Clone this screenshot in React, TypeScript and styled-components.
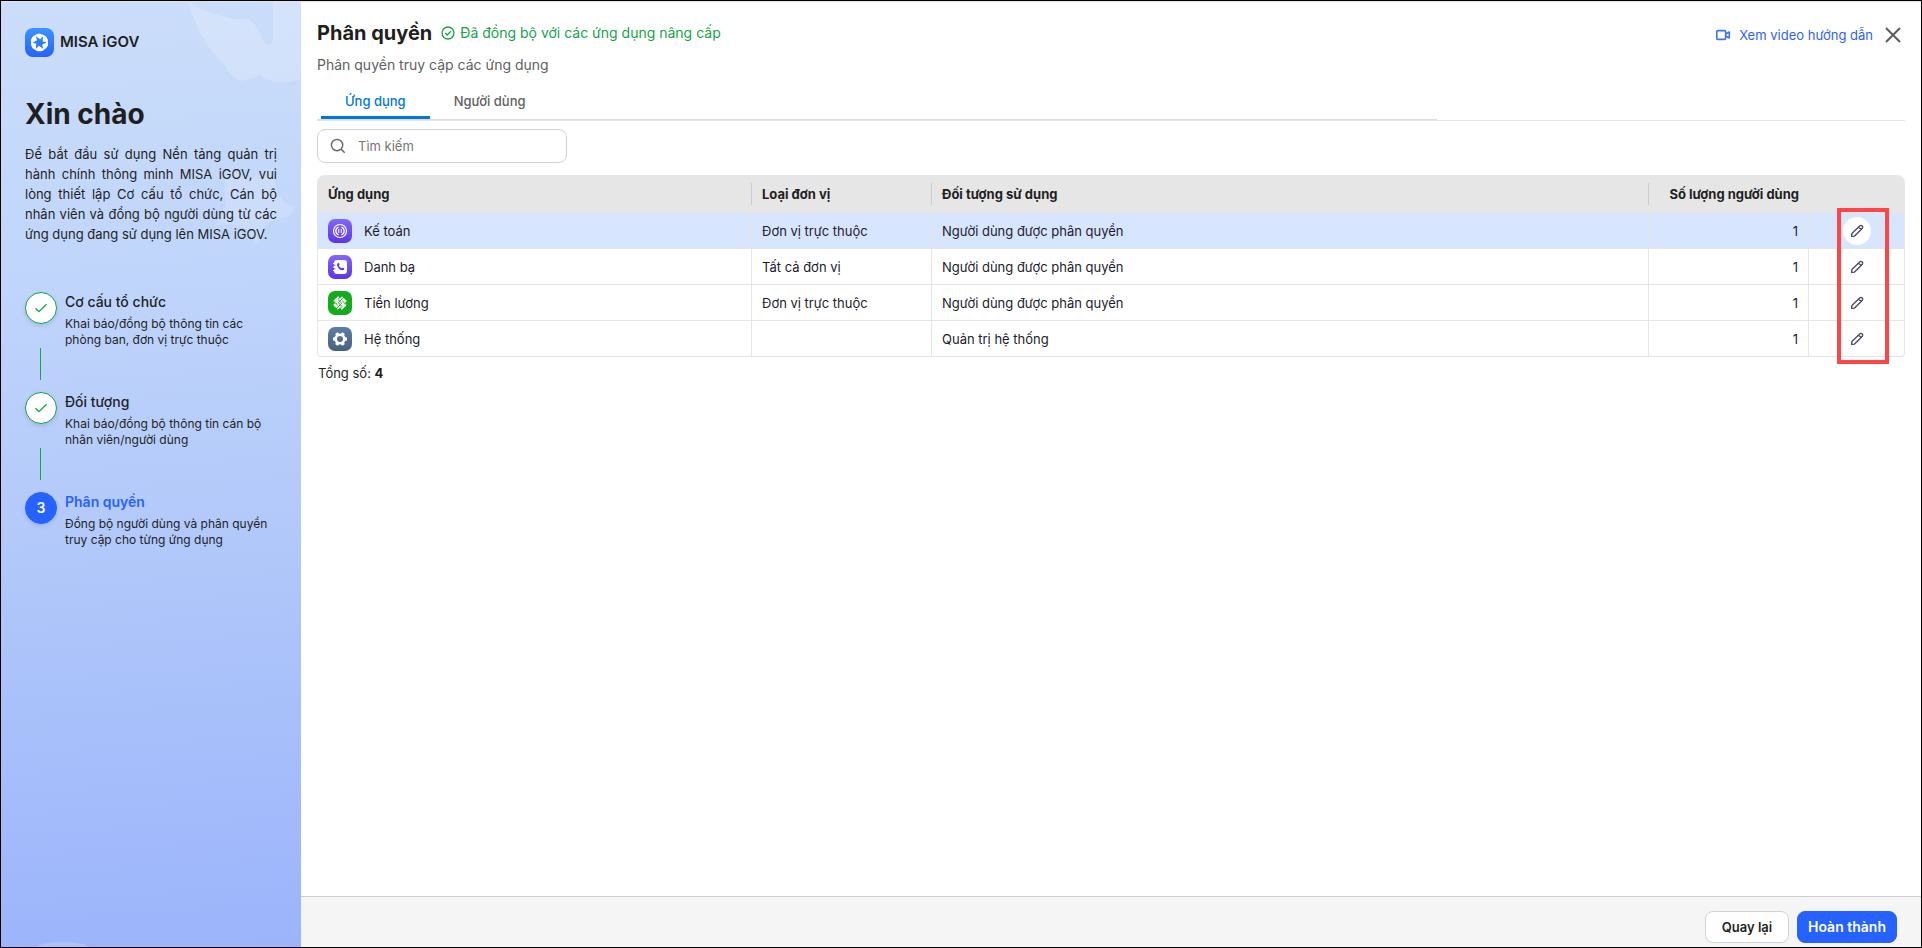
import React from "react";
import styled, { createGlobalStyle, css } from "styled-components";

const Global = createGlobalStyle`
  *, *::before, *::after { box-sizing: border-box; }
  body { margin: 0; background: #fff; }
  body, button, input, table { font-family: Inter, "Noto Sans", sans-serif; font-size: 13px; line-height: 20px; color: #1f1f1f; }
  h1, h2, h3, p, ol { margin: 0; padding: 0; }
`;

const Frame = styled.div`
  display: flex;
  min-height: 100vh;
  border: 1px solid #000;
`;

const Sidebar = styled.aside`
  position: relative;
  flex: 0 0 300px;
  padding: 26px 24px;
  overflow: hidden;
  background: linear-gradient(176deg, #cbddf9 0%, #bfd5fb 30%, #b0c7fa 60%, #9bb4fb 100%);
  border-top: 1px solid #e4e2ea;
`;

const Decoration = styled.svg`
  position: absolute;
  inset: 0;
  width: 100%;
  height: 100%;
`;

const SidebarBody = styled.div`
  position: relative;
`;

const Brand = styled.div`
  display: flex;
  align-items: center;
  gap: 6px;
  height: 28px;
  font-size: 15px;
  font-weight: 600;
`;

const Greeting = styled.h2`
  margin-top: 40px;
  font-size: 28px;
  line-height: 36px;
  font-weight: 700;
`;

const Intro = styled.p`
  margin-top: 12px;
  text-align: justify;
`;

const Steps = styled.ol`
  margin-top: 48px;
  list-style: none;
`;

const Step = styled.li`
  display: flex;
  gap: 8px;
  min-height: 100px;
`;

const StepRail = styled.div`
  display: flex;
  flex-direction: column;
  align-items: center;
  gap: 24px;
`;

const StepMark = styled.span<{ $current?: boolean }>`
  display: flex;
  align-items: center;
  justify-content: center;
  width: 32px;
  height: 32px;
  border-radius: 50%;
  font-size: 14px;
  font-weight: 600;
  border: 1px solid ${(p) => (p.$current ? "#2662ff" : "#16a34a")};
  background: ${(p) => (p.$current ? "#2662ff" : "#fff")};
  color: ${(p) => (p.$current ? "#fff" : "#16a34a")};
  box-shadow: 0 2px 4px rgba(30, 60, 130, 0.15);
`;

const StepLine = styled.span`
  width: 1px;
  height: 32px;
  margin-right: 1px;
  background: #16a34a;
`;

const StepTitle = styled.h3<{ $current?: boolean }>`
  font-size: 14px;
  line-height: 20px;
  font-weight: ${(p) => (p.$current ? 600 : 500)};
  color: ${(p) => (p.$current ? "#2662ff" : "#1f1f1f")};
`;

const StepText = styled.p`
  margin-top: 4px;
  font-size: 12px;
  line-height: 16px;
`;

const Main = styled.main`
  display: flex;
  flex: 1;
  flex-direction: column;
  min-width: 0;
  border-top: 1px solid #e4e2e6;
`;

const Content = styled.div`
  flex: 1;
  padding: 16px;
`;

const Header = styled.header`
  display: flex;
  align-items: center;
  justify-content: space-between;
  height: 30px;
`;

const HeaderGroup = styled.div`
  display: flex;
  align-items: center;
  gap: 8px;
`;

const HeaderActions = styled(HeaderGroup)`
  padding-top: 4px;
`;

const Title = styled.h1`
  font-size: 20px;
  line-height: 28px;
  font-weight: 700;
`;

const SyncStatus = styled.span`
  display: flex;
  align-items: center;
  gap: 4px;
  font-size: 14px;
  color: #16a34a;
`;

const VideoLink = styled.a`
  display: flex;
  align-items: center;
  gap: 8px;
  color: #2f62fa;
  text-decoration: none;
`;

const iconButton = css`
  display: inline-flex;
  align-items: center;
  justify-content: center;
  padding: 0;
  border: 0;
  background: none;
  cursor: pointer;
`;

const CloseButton = styled.button`
  ${iconButton}
  width: 24px;
  height: 24px;
`;

const Subtitle = styled.p`
  margin-top: 6px;
  font-size: 14px;
  line-height: 22px;
  color: #616161;
`;

const TabBar = styled.div`
  border-bottom: 1px solid #e4e4e9;
`;

const Tabs = styled.div`
  display: flex;
  width: calc(70% + 8px);
  padding-left: 4px;
  border-bottom: 1px solid #dcdcdc;
`;

const Tab = styled.button<{ $active?: boolean }>`
  height: 43px;
  padding: 13px 24px 4px;
  border: 0;
  border-bottom: 3px solid ${(p) => (p.$active ? "#0078d7" : "transparent")};
  background: none;
  font-weight: 500;
  color: ${(p) => (p.$active ? "#0078d7" : "#616161")};
  cursor: pointer;
`;

const SearchBox = styled.label`
  display: flex;
  align-items: center;
  gap: 12px;
  width: 250px;
  height: 34px;
  margin-top: 8px;
  padding: 0 12px;
  border: 1px solid #d1d1db;
  border-radius: 8px;
`;

const SearchInput = styled.input`
  flex: 1;
  min-width: 0;
  padding: 0;
  border: 0;
  outline: 0;
  background: none;
  &::placeholder { color: #757575; opacity: 1; }
`;

const TableWrap = styled.div`
  position: relative;
  margin-top: 12px;
`;

const Table = styled.table`
  width: 100%;
  table-layout: fixed;
  border-collapse: separate;
  border-spacing: 0;
`;

const HeadCell = styled.th<{ $width?: number; $align?: string; $divided?: boolean }>`
  position: relative;
  width: ${(p) => (p.$width ? `${p.$width}px` : "auto")};
  height: 38px;
  padding: 0 10px;
  background: #e6e6e6;
  font-weight: 700;
  text-align: ${(p) => p.$align || "left"};
  &:first-child { border-top-left-radius: 8px; padding-left: 11px; }
  &:last-child { border-top-right-radius: 8px; }
  ${(p) =>
    p.$divided &&
    css`
      &::after {
        content: "";
        position: absolute;
        top: 8px;
        right: 0;
        width: 1px;
        height: 22px;
        background: #ccc;
      }
    `}
`;

const Row = styled.tr<{ $selected?: boolean }>`
  background: ${(p) => (p.$selected ? "#d8e5ff" : "#fff")};
  &:last-child td:first-child { border-bottom-left-radius: 4px; }
  &:last-child td:last-child { border-bottom-right-radius: 4px; }
`;

const Cell = styled.td<{ $align?: string }>`
  height: 36px;
  padding: 0 10px;
  border-right: 1px solid #e4e4e9;
  border-bottom: 1px solid #e4e4e9;
  color: #1c1c2b;
  text-align: ${(p) => p.$align || "left"};
  &:first-child { border-left: 1px solid #e4e4e9; }
`;

const AppName = styled.span`
  display: flex;
  align-items: center;
  gap: 12px;
`;

const EditButton = styled.button<{ $selected?: boolean }>`
  ${iconButton}
  width: 28px;
  height: 28px;
  border-radius: 50%;
  background: ${(p) => (p.$selected ? "#fff" : "transparent")};
  vertical-align: middle;
`;

const Highlight = styled.div`
  position: absolute;
  top: 33px;
  right: 16px;
  width: 52px;
  bottom: -7px;
  border: 4px solid #ff4545;
  pointer-events: none;
`;

const Total = styled.p`
  margin: 6px 1px 0;
`;

const Footer = styled.footer`
  display: flex;
  justify-content: flex-end;
  gap: 8px;
  height: 51px;
  padding: 14px 24px 4px;
  border-top: 1px solid #ccc;
  background: #f5f5f5;
`;

const ActionButton = styled.button<{ $primary?: boolean }>`
  min-width: ${(p) => (p.$primary ? 100 : 84)}px;
  height: 32px;
  padding: 0 8px;
  border: 1px solid ${(p) => (p.$primary ? "#2662ff" : "#d1d1db")};
  border-radius: 8px;
  background: ${(p) => (p.$primary ? "#2662ff" : "#fff")};
  font-size: ${(p) => (p.$primary ? 14 : 13)}px;
  font-weight: 600;
  color: ${(p) => (p.$primary ? "#fff" : "#1f1f1f")};
  cursor: pointer;
`;

function BrandLogo() {
  return (
    <svg width="29" height="29" viewBox="0 0 29 29" aria-hidden="true">
      <defs>
        <linearGradient id="brand" x1="0" y1="0" x2="0" y2="1">
          <stop offset="0" stopColor="#3b93ff" />
          <stop offset="1" stopColor="#2463fb" />
        </linearGradient>
      </defs>
      <rect width="29" height="29" rx="8" fill="url(#brand)" />
      <g transform="translate(14.5 14.5)" fill="#fff">
        {[0, 60, 120, 180, 240, 300].map((a) => (
          <path key={a} transform={`rotate(${a})`} d="M-4.2 -7.4C-1.6 -9.8 3.4 -9.2 5.4 -6C3.4 -6.4 1.8 -5 0.8 -3.2C-0.4 -4.4 -2.8 -4.8 -4.2 -7.4Z" />
        ))}
      </g>
    </svg>
  );
}

const tileColors: Record<string, [string, string]> = {
  accounting: ["#8268fa", "#5f33e6"],
  contacts: ["#8268fa", "#5f33e6"],
  payroll: ["#14ab1c", "#14ab1c"],
  system: ["#5d7ea8", "#46607f"],
};

function AppIcon({ kind }: { kind: string }) {
  const [from, to] = tileColors[kind];
  return (
    <svg width="24" height="24" viewBox="0 0 24 24" aria-hidden="true">
      <defs>
        <linearGradient id={kind} x1="0" y1="0" x2="0" y2="1">
          <stop offset="0" stopColor={from} />
          <stop offset="1" stopColor={to} />
        </linearGradient>
      </defs>
      <rect width="24" height="24" rx="7" fill={`url(#${kind})`} />
      {kind === "accounting" && (
        <g fill="none" stroke="#fff">
          <circle cx="12" cy="12" r="6.5" strokeWidth="1.2" />
          <path d="M10.6 8.2A4 4 0 0 0 10.6 15.8M13.4 8.2A4 4 0 0 1 13.4 15.8" strokeWidth="1.3" />
          <path d="M10.8 10v4M13.2 10v4" strokeWidth="1" />
        </g>
      )}
      {kind === "contacts" && (
        <>
          <rect x="6" y="5" width="13" height="14" rx="3" fill="#fff" />
          <path d="M5 8.5h3M5 12h3M5 15.5h3" stroke="#fff" strokeWidth="1.2" />
          <path d="M6 10.2h1.5M6 13.8h1.5" stroke={from} />
          <path d="M9.4 8.6c.8-1 1.6-.6 2 .5.3.9-.5 1.2-.3 1.8.3.9 1.2 1.9 2.2 2.2.7.2 1-.7 1.8-.4 1.2.4 1.5 1.2.6 2-1.2 1.1-3.2.5-4.6-.9-1.5-1.5-2.6-3.9-1.7-5.200Z" fill={to} />
        </>
      )}
      {kind === "payroll" && (
        <>
          <path d="M7.600 7.600L16.400 16.400M16.400 7.600L7.600 16.400" stroke="#fff" strokeWidth="7" strokeLinejoin="round" />
          <g fill="none" stroke={from} strokeWidth="1">
            <path d="M16.200 5.800L10.300 11.700L14 15.400L10.800 18.600" />
            <path d="M13.200 5.400L10 8.600L13.700 12.300L7.800 18.200" />
            <path d="M5.200 9.600L9.800 14.200M14.200 9.800L18.800 14.400" />
          </g>
        </>
      )}
      {kind === "system" && (
        <g transform="translate(12 12)">
          <circle r="4.3" fill="none" stroke="#fff" strokeWidth="2.6" />
          {[0, 60, 120, 180, 240, 300].map((a) => (
            <rect key={a} transform={`rotate(${a})`} x="4" y="-1.7" width="3" height="3.4" rx="1" fill="#fff" />
          ))}
        </g>
      )}
    </svg>
  );
}

function PencilIcon() {
  return (
    <svg width="14" height="14" viewBox="0 0 14 14" fill="none" stroke="#4b5060" strokeWidth="1.4" strokeLinejoin="round" aria-hidden="true">
      <path d="M1.6 12.400L1.900 9.400L9.600 1.900C10.400 1.100 11.500 1.200 12.100 1.900C12.800 2.500 12.900 3.600 12.100 4.400L4.600 12.100L1.600 12.400ZM8.600 3L11 5.400" />
    </svg>
  );
}

const steps = [
  { title: "Cơ cấu tổ chức", text: "Khai báo/đồng bộ thông tin các phòng ban, đơn vị trực thuộc" },
  { title: "Đối tượng", text: "Khai báo/đồng bộ thông tin cán bộ nhân viên/người dùng" },
  { title: "Phân quyền", text: "Đồng bộ người dùng và phân quyền truy cập cho từng ứng dụng", current: true },
];

const apps = [
  { kind: "accounting", name: "Kế toán", unit: "Đơn vị trực thuộc", audience: "Người dùng được phân quyền", users: 1 },
  { kind: "contacts", name: "Danh bạ", unit: "Tất cả đơn vị", audience: "Người dùng được phân quyền", users: 1 },
  { kind: "payroll", name: "Tiền lương", unit: "Đơn vị trực thuộc", audience: "Người dùng được phân quyền", users: 1 },
  { kind: "system", name: "Hệ thống", unit: "", audience: "Quản trị hệ thống", users: 1 },
];

export default function App() {
  return (
    <>
      <Global />
      <Frame>
        <Sidebar>
          <Decoration aria-hidden="true">
            <g fill="#fff">
              <path opacity=".2" d="M187 0C195 25 206 48 222 61C227 69 232 76 239 79C247 78 253 76 258 73C270 82 286 82 300 77V0H272V38C268 50 262 40 256 26C251 17 245 16 238 17C219 16 201 8 187 0Z" />
              <path opacity=".15" d="M227 164C237 177 255 180 272 165C272 187 278 198 292 205C294 212 287 216 276 217C266 219 262 225 260 236C257 247 253 244 250 233C246 224 235 221 213 224C220 215 225 207 224 198C223 185 224 171 227 164Z" />
              <ellipse opacity=".2" cx="62" cy="100%" rx="25" ry="5" />
            </g>
          </Decoration>
          <SidebarBody>
            <Brand>
              <BrandLogo />
              MISA iGOV
            </Brand>
            <Greeting>Xin chào</Greeting>
            <Intro>
              Để bắt đầu sử dụng Nền tảng quản trị hành chính thông minh MISA iGOV, vui lòng thiết lập Cơ cấu tổ chức, Cán bộ
              nhân viên và đồng bộ người dùng từ các ứng dụng đang sử dụng lên MISA iGOV.
            </Intro>
            <Steps>
              {steps.map((step, i) => (
                <Step key={step.title}>
                  <StepRail>
                    <StepMark $current={step.current}>
                      {step.current ? (
                        i + 1
                      ) : (
                        <svg width="14" height="12" viewBox="0 0 14 12" fill="none" stroke="currentColor" strokeWidth="1.3" aria-label="Hoàn tất">
                          <path d="M1.5 6.2L5 9.7L12.5 2.2" />
                        </svg>
                      )}
                    </StepMark>
                    {!step.current && <StepLine />}
                  </StepRail>
                  <div>
                    <StepTitle $current={step.current}>{step.title}</StepTitle>
                    <StepText>{step.text}</StepText>
                  </div>
                </Step>
              ))}
            </Steps>
          </SidebarBody>
        </Sidebar>
        <Main>
          <Content>
            <Header>
              <HeaderGroup>
                <Title>Phân quyền</Title>
                <SyncStatus>
                  <svg width="16" height="16" viewBox="0 0 16 16" fill="none" stroke="currentColor" strokeWidth="1.3" aria-hidden="true">
                    <circle cx="8" cy="8" r="6" />
                    <path d="M5.3 8L7.3 10L10.8 6.3" />
                  </svg>
                  Đã đồng bộ với các ứng dụng nâng cấp
                </SyncStatus>
              </HeaderGroup>
              <HeaderActions>
                <VideoLink href="#video">
                  <svg width="16" height="16" viewBox="0 0 16 16" fill="none" stroke="#3f74e8" strokeWidth="1.6" strokeLinejoin="round" aria-hidden="true">
                    <rect x="1.8" y="3.600" width="8.800" height="8.800" rx="1" />
                    <path d="M10.600 7L14.300 5V11L10.600 9" />
                  </svg>
                  Xem video hướng dẫn
                </VideoLink>
                <CloseButton aria-label="Đóng">
                  <svg width="16" height="16" viewBox="0 0 16 16" stroke="#5c5c5c" strokeWidth="2" aria-hidden="true">
                    <path d="M1 1L15 15M15 1L1 15" />
                  </svg>
                </CloseButton>
              </HeaderActions>
            </Header>
            <Subtitle>Phân quyền truy cập các ứng dụng</Subtitle>
            <TabBar>
              <Tabs role="tablist">
                <Tab role="tab" aria-selected="true" $active>
                  Ứng dụng
                </Tab>
                <Tab role="tab" aria-selected="false">
                  Người dùng
                </Tab>
              </Tabs>
            </TabBar>
            <SearchBox>
              <svg width="16" height="16" viewBox="0 0 17 17" fill="none" stroke="#6b6b6b" strokeWidth="1.6" aria-hidden="true">
                <circle cx="7.5" cy="7.5" r="6" />
                <path d="M11.8 11.8L15.6 15.6" />
              </svg>
              <SearchInput type="text" placeholder="Tìm kiếm" aria-label="Tìm kiếm" />
            </SearchBox>
            <TableWrap>
              <Table>
                <thead>
                  <tr>
                    <HeadCell $width={435} $divided>Ứng dụng</HeadCell>
                    <HeadCell $width={180} $divided>Loại đơn vị</HeadCell>
                    <HeadCell $divided>Đối tượng sử dụng</HeadCell>
                    <HeadCell $width={160} $align="right">Số lượng người dùng</HeadCell>
                    <HeadCell $width={96} aria-label="Thao tác" />
                  </tr>
                </thead>
                <tbody>
                  {apps.map((app, i) => (
                    <Row key={app.kind} $selected={i === 0}>
                      <Cell>
                        <AppName>
                          <AppIcon kind={app.kind} />
                          {app.name}
                        </AppName>
                      </Cell>
                      <Cell>{app.unit}</Cell>
                      <Cell>{app.audience}</Cell>
                      <Cell $align="right">{app.users}</Cell>
                      <Cell $align="center">
                        <EditButton $selected={i === 0} aria-label={`Sửa ${app.name}`}>
                          <PencilIcon />
                        </EditButton>
                      </Cell>
                    </Row>
                  ))}
                </tbody>
              </Table>
              <Highlight />
            </TableWrap>
            <Total>
              Tổng số: <strong>4</strong>
            </Total>
          </Content>
          <Footer>
            <ActionButton>Quay lại</ActionButton>
            <ActionButton $primary>Hoàn thành</ActionButton>
          </Footer>
        </Main>
      </Frame>
    </>
  );
}
